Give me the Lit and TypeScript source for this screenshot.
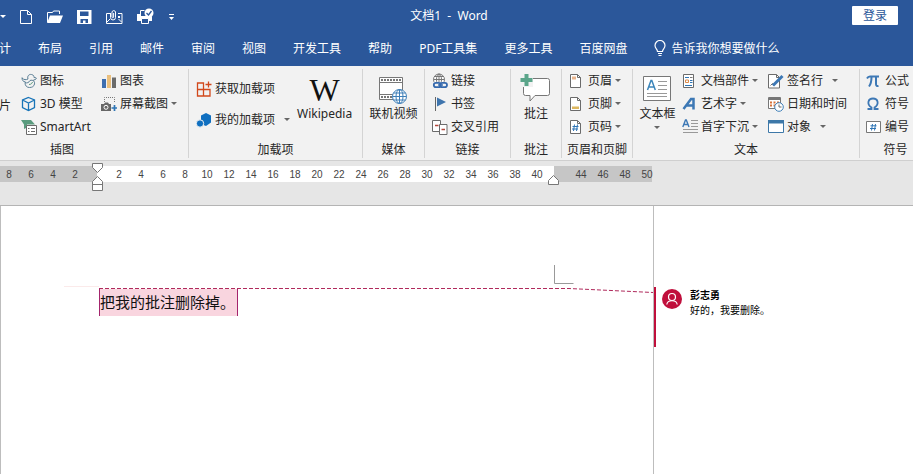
import { LitElement, html, css, svg, nothing, TemplateResult } from "lit";
import { customElement, property } from "lit/decorators.js";

const BLUE = "#2f75b5";
const GRAY = "#6b6b6b";

const icon = (w: number, h: number, body: TemplateResult) =>
  html`<svg width=${w} height=${h} viewBox="0 0 ${w} ${h}" fill="none" aria-hidden="true">${body}</svg>`;

const page = svg`<path d="M1.500 1.500h7l3 3v10h-10z" fill="#fff" stroke=${GRAY}/><path d="M8.500 1.500v3h3" stroke=${GRAY}/>`;

const icons: Record<string, TemplateResult> = {
  newDoc: icon(12, 16, svg`<path d="M.5 1.500h7l4 4v9H.5zM7.500 1.500v4h4" stroke="#fff"/>`),
  open: icon(17, 16, svg`<path d="M1.500 13V3.500h5l1-1.500h6v3" stroke="#fff"/><path d="M1 14 4 6.500h13L14 14z" fill="#fff"/>`),
  save: icon(15, 16, svg`<path d="M0 1h14.500v14H0z" fill="#fff"/><path d="M3 2.500h8.500v4.500H3zM3.500 10h7.500v4H8.500v-2.500H6V14H3.500z" fill="#2b579a"/>`),
  attach: icon(17, 16, svg`<path d="M4 4.500H.5v10h15.500v-10h-4M1 13l3-3M15.500 13l-3-3" stroke="#fff"/><path d="M4.500 4v4.500a2.500 2.500 0 0 0 5 0V3a1.800 1.800 0 0 0-3.500 0v5a.8.800 0 0 0 1.600 0V4" stroke="#fff"/><path d="M12 7h2v2h-2z" fill="#fff"/>`),
  print: icon(17, 17, svg`<path d="M0 6h4v2h9l2 1v4h-3v-2H4v2H0z" fill="#fff"/><path d="M4.500 10.500h7v5h-7z" fill="#2b579a" stroke="#fff"/><path d="M3.500 6V2.500h4" stroke="#fff"/><circle cx="12" cy="5" r="4.500" fill="#fff"/><path d="m9.500 5 2 2 3-4" stroke="#2b579a" stroke-width="1.300"/>`),
  more: icon(7, 8, svg`<path d="M1 1.500h5" stroke="#fff"/><path d="M1 4h5L3.500 7z" fill="#fff"/>`),
  bulb: icon(12, 17, svg`<path d="M3.500 11.500C3.500 9 1 8.500 1 5.500a5 5 0 0 1 10 0c0 3-2.500 3.500-2.500 6zM4 13.500h4M4.500 15.500h3" stroke="#fff" stroke-width="1.200"/>`),
  duck: icon(16, 16, svg`<path d="M1 5c2 2 4 2 6 1-1-3 1-5 3.500-4.500C13 2 13 3.500 13 4.500c2 0 3 .5 2 1.500l-3 1.500" stroke="#5b7f95"/><path d="M1 4.500c0 3 1 4 3.500 4.500" stroke="#5b7f95"/><path d="M4 9.500c2 1 4 0 5-2 3-1 5 1 4.500 3.500-.5 2.500-2.500 3.500-5 3.500S4 13 4 9.500z" stroke="#5b7f95"/><path d="M8 11.500c2 0 3-1 3.500-2.500" stroke="#5b9b7d"/>`),
  cube: icon(16, 16, svg`<path d="M7.500 1.500 13.500 4v7.500l-6 3-6-3V4zM1.500 4l6 3 6-3M7.500 7v7.500" stroke="#1874b8" stroke-width="1.300"/>`),
  smart: icon(16, 16, svg`<path d="M0 1h10l4 4.500H6v3L3 10V5.500z" fill="#5a9b7e"/><path d="M5.500 6.500h10v9h-10z" fill="#fff" stroke=${GRAY}/><path d="M7 9.500h1.500M10 9.500h4M7 12.500h1.500M10 12.500h4" stroke=${GRAY}/>`),
  chart: icon(16, 16, svg`<path d="M1 6h4v9H1z" fill="#3e6fb0"/><path d="M6 2h4v13H6z" fill="#eabf7d"/><path d="M11 4.500h4V15h-4z" fill="#6b6b6b"/>`),
  shot: icon(16, 16, svg`<path d="M3.500 6V1.500h10V7" stroke="#777" stroke-dasharray="1 1"/><path d="M0 8h3l1-1.500h3L8 8h2v7H0z" fill="#666"/><circle cx="5" cy="11.300" r="2" fill="#666" stroke="#fff"/><path d="M13.500 9v6M10.500 12h6" stroke="#2f75b5" stroke-width="1.700"/>`),
  store: icon(16, 16, svg`<path d="M1.500 2h6v6.500h-6zM1.500 8.500h6V15h-6zM7.500 8.500H14V15H7.500zM12.500.5v6M9.500 3.500h6" stroke="#d2491c" stroke-width="1.300"/>`),
  addins: icon(16, 16, svg`<path d="m5 3.500 5-2.500 5 2.500v7L10 14l-5-2z" fill="#0f6fc0"/><circle cx="4" cy="11.500" r="3.700" fill="#0f6fc0" stroke="#f2f2f2"/>`),
  video: icon(32, 30, svg`<path d="M2.500 2.500h23v22h-23z" fill="#fff" stroke="#777"/><path d="M4 5h21M4 22h21" stroke="#777" stroke-width="2" stroke-dasharray="2 1"/><path d="M3 7.500h22M3 19.500h22" stroke="#777"/><circle cx="22.500" cy="21.500" r="7" fill="#fff" stroke="#3e7fb8"/><ellipse cx="22.500" cy="21.500" rx="3.500" ry="7" stroke="#3e7fb8"/><path d="M22.500 14.500v14M15.500 21.500h14M16.500 18h12M16.500 25h12" stroke="#3e7fb8"/>`),
  link: icon(16, 16, svg`<circle cx="7" cy="6.500" r="5.500" fill="#fff" stroke="#777"/><ellipse cx="7" cy="6.500" rx="2.500" ry="5.500" stroke="#777"/><path d="M1.500 6.500h11M2.500 3.500h9M7 1v10" stroke="#777"/><path d="M1 9h15v6H1z" fill="#f2f2f2"/><rect x="1.800" y="9.800" width="7" height="4.400" rx="2.200" stroke="#3569ad" stroke-width="1.800"/><rect x="8" y="9.800" width="7" height="4.400" rx="2.200" stroke="#3569ad" stroke-width="1.800"/><path d="M6 12h5" stroke="#3569ad" stroke-width="1.400"/>`),
  flag: icon(16, 16, svg`<path d="M3.500 1v14" stroke="#666"/><path d="M5 1.500 14 6l-9 4.500z" fill="#3f75ad"/>`),
  cross: icon(16, 16, svg`<path d="M.5 1.500h8v11h-8z" fill="#fff" stroke=${GRAY}/><path d="M7.500 5.500H15v10H7.500z" fill="#fff" stroke=${GRAY}/><path d="M3 6.500h3.500M9.500 10.500H13" stroke="#b5483c" stroke-width="1.600"/>`),
  comment: icon(32, 32, svg`<path d="M4.500 4.500h23q2 0 2 2v13q0 2-2 2H15l-5 5.500v-5.500H5.500q-2 0-2-2v-15z" fill="#fff" stroke="#777"/><path d="M0 0h13v13H0z" fill="#f2f2f2"/><path d="M6.500 0v12M.5 6h12" stroke="#5ba58a" stroke-width="4"/>`),
  header: icon(14, 16, svg`${page}<path d="M3 3.500h4v3H3z" fill="#e9b48c"/>`),
  footer: icon(14, 16, svg`${page}<path d="M3 10.500h7V13H3z" fill="#ddb75e"/>`),
  pageNo: icon(14, 16, svg`${page}<path d="M5.500 5.500 4.500 12M8.500 5.500 7.500 12M3.500 7.500h6M3 10h6" stroke=${BLUE}/>`),
  textbox: icon(28, 28, svg`<path d="M.5.5h27v24H.5z" fill="#fff" stroke="#777"/><path d="M15 5.500h9M15 9.500h9M15 13.500h9M4 17.500h20M4 20.500h20" stroke="#999"/><path d="M4.500 14 8 4.500h.8L12.300 14M6 11h5" stroke="#3d86ba" stroke-width="1.500"/>`),
  parts: icon(15, 16, svg`<path d="M1.500 1.500h10v13h-10z" fill="#fff" stroke=${GRAY}/><path d="M3 4.500h4M3 12.500h7M8 7.500h2.500M8 9.500h2.500" stroke=${BLUE}/><path d="M3.500 7h3v2.500h-3z" stroke="#dd8b4a"/><path d="M8 4.500h2.500" stroke="#777"/>`),
  wordart: icon(15, 16, svg`<path d="M1.500 13 9 3h2.500v10.500M4.500 9.500H11" stroke="#3d78b5" stroke-width="2.500"/>`),
  dropcap: icon(16, 16, svg`<path d="m.8 8 2.700-7h.8L7 8M2 5.500h4" stroke="#3d78b5" stroke-width="1.400"/><path d="M9 1.500h7M9 4.500h7M9 7.500h7M1 10.500h15M1 13.500h15" stroke="#999"/>`),
  sign: icon(16, 16, svg`<path d="M.5 1.500h8l3 3v10.500H.5z" fill="#fff" stroke=${GRAY}/><path d="M8.500 1.500v3h3M2.500 12.500l2-2 1 2" stroke=${GRAY}/><path d="M5 12.500 14.500 3" stroke="#3d78b5" stroke-width="3"/>`),
  date: icon(16, 16, svg`<path d="M.5 1.500h12v11H.5z" fill="#fff" stroke="#777"/><path d="M1 3h11" stroke="#777" stroke-width="2"/><path d="M2 6.500h9M2 9.500h5" stroke="#d9733a" stroke-width="2" stroke-dasharray="2 1.500"/><circle cx="11" cy="11" r="4.300" fill="#fff" stroke="#3e7fb8"/><path d="M11 8.500V11h2.500" stroke="#666"/>`),
  object: icon(16, 16, svg`<path d="M.5 1.500h15v12H.5z" fill="#fff" stroke="#3d78a8"/><path d="M0 1h16v3.500H0z" fill="#3d78a8"/>`),
  pi: icon(15, 16, svg`<path d="M1 5.500Q2 3.500 4 3.500h9M5.500 4c0 4-.5 7-2.500 9.500M10 4v7q0 2.500 2.500 2" stroke="#3d78b5" stroke-width="2"/>`),
  omega: icon(15, 16, svg`<path d="M1.500 13h4v-1.500C2.500 9.500 2 7.500 2.500 5.500c1-4 8-4 9 0 .5 2 0 4-3 6V13h4" stroke="#3d78b5" stroke-width="1.800"/>`),
  number: icon(16, 16, svg`<path d="M.5 2.500h14v11H.5z" fill="#fff" stroke="#777"/><path d="M6.500 5 5.500 11.500M9.500 5 8.500 11.500M4.500 6.800h6M4 9.500h6" stroke=${BLUE}/>`),
};

interface Command {
  icon: string;
  label: string;
  menu?: boolean;
  /** The arrow is a separate half of the button, set further off. */
  split?: boolean;
}

/** One command of the ribbon: icon beside label, or icon above it when large. */
@customElement("ribbon-command")
class RibbonCommand extends LitElement {
  static styles = css`
    :host { display: block; }
    button {
      display: flex; align-items: center; gap: 3px; height: 23px; padding: 0; border: 0;
      background: none; color: #262626; font: inherit; line-height: 16px; white-space: nowrap;
    }
    svg { display: block; flex: none; }
    .pic { display: flex; min-width: 16px; }
    .arrow { border: 3px solid transparent; border-top-color: #666; border-bottom: 0; }
    .split .arrow { margin-left: 6px; }
    .large { flex-direction: column; gap: 0; height: auto; margin: 0 auto; }
    .large .pic { height: 32px; align-items: center; justify-content: center; }
    .large .arrow { margin-top: 4px; }
    .wiki { font: 32px/32px "Liberation Serif", serif; color: #111; }
  `;
  @property() icon = "";
  @property() label = "";
  @property({ type: Boolean }) menu = false;
  @property({ type: Boolean }) split = false;
  @property({ type: Boolean }) large = false;

  render() {
    return html`<button class=${this.large ? "large" : this.split ? "split" : "small"}>
      ${this.icon === "wiki" ? html`<span class="pic wiki" aria-hidden="true">W</span>`
        : this.icon ? html`<span class="pic">${icons[this.icon]}</span>` : nothing}
      <span>${this.label}</span>
      ${this.menu || this.split ? html`<span class="arrow"></span>` : nothing}
    </button>`;
  }
}

const column = (cls: string, commands: Command[]) => html`<div class="column ${cls}">
  ${commands.map((c) => html`<ribbon-command .icon=${c.icon} .label=${c.label} .menu=${!!c.menu} .split=${!!c.split}></ribbon-command>`)}
</div>`;

const large = (iconName: string, label: string, menu = false) =>
  html`<ribbon-command class="big" large .icon=${iconName} .label=${label} .menu=${menu}></ribbon-command>`;

const group = (cls: string, title: string, body: TemplateResult) => html`<section class="group ${cls}" aria-label=${title}>
  <div class="commands">${body}</div>
  <h2>${title}</h2>
</section>`;

const TABS = ["计", "布局", "引用", "邮件", "审阅", "视图", "开发工具", "帮助", "PDF工具集", "更多工具", "百度网盘"];
const QUICK = [["newDoc", "新建"], ["open", "打开"], ["save", "保存"], ["attach", "电子邮件"], ["print", "打印预览"]];
const TICKS = ["8", "6", "4", "2", "", ...Array.from({ length: 25 }, (_, i) => (i === 20 ? "" : String(2 * i + 2)))];

@customElement("app-root")
class AppRoot extends LitElement {
  static styles = css`
    :host {
      display: flex; flex-direction: column; min-height: 100vh; overflow: hidden; background: #fff;
      font: 12px/16px "Noto Sans", "Noto Sans CJK SC", sans-serif; color: #262626;
    }
    svg { display: block; flex: none; }
    button { border: 0; padding: 0; background: none; color: inherit; font: inherit; white-space: nowrap; }
    h1, h2, p { margin: 0; font: inherit; }

    .top { background: #2b579a; color: #fff; }
    .titlebar {
      display: grid; grid-template-columns: 1fr auto 1fr; align-items: center; height: 31px;
      padding-right: 15px;
    }
    .quick { display: flex; align-items: center; gap: 14px; padding-top: 2px; }
    .quick .caret { border: 3px solid transparent; border-top-color: #fff; border-bottom: 0; }
    .title { white-space: pre; }
    .login { justify-self: end; width: 46px; height: 19px; background: #fff; color: #2b579a; border-radius: 1px; }
    .tabs { display: flex; align-items: center; gap: 27px; height: 35px; margin-left: -1px; }
    .tell { display: flex; align-items: center; gap: 5px; flex: 1; }
    .tell input {
      flex: 1; min-width: 0; padding: 0; border: 0; outline: 0; background: none; color: #fff; font: inherit;
    }
    .tell input::placeholder { color: #fff; opacity: 1; }

    .ribbon { display: flex; height: 89px; padding: 3px 0 2px; background: #f2f2f2; border-bottom: 1px solid #cfcfcf; }
    .group {
      display: flex; flex-direction: column; flex: none; box-sizing: border-box;
      border-right: 1px solid #d4d4d4;
    }
    .commands { display: flex; flex: 1; }
    .group h2 { text-align: center; line-height: 16px; white-space: nowrap; }
    .column { display: flex; flex-direction: column; flex: none; }
    .big { padding-top: 5px; }
    .pictures { width: 189px; }
    .pictures h2 { padding-right: 64px; }
    .cut { justify-content: center; width: 22px; margin-left: -1px; }
    .shapes { width: 80px; }
    .addins { width: 174px; }
    .addins .column { gap: 8px; padding: 8px 7px 0 7px; }
    .media { width: 62px; }
    .links { width: 86px; }
    .links .column { padding-left: 7px; }
    .notes { width: 51px; }
    .media .big, .notes .big { flex: 1; }
    .headers { width: 71px; }
    .headers .column { padding-left: 7px; }
    .text { width: 227px; }
    .text .big { width: 49px; }
    .parts { width: 86px; }
    .symbols { flex: 1; border: 0; }
    .symbols .column { padding-left: 6px; }
    .symbols h2 { padding-left: 18px; }

    .ruler { position: relative; height: 44px; background: #e6e6e6; border-bottom: 1px solid #b4b4b4; overflow: hidden; }
    .scale { width: 652px; height: 16px; margin-top: 5px; display: flex; background: #c6c6c6; }
    .scale .live { width: 457px; margin-left: 97px; background: #fff; }
    .ticks {
      position: absolute; left: -2px; top: 5px; width: 660px; display: grid;
      grid-template-columns: repeat(30, 1fr); text-align: center;
      font: 10px/18px "Liberation Sans", sans-serif; color: #444;
    }
    .marker { position: absolute; top: 2px; left: 91px; }
    .marker.right { top: 14px; left: 548px; }

    .desk { position: relative; display: grid; grid-template-columns: 654px 1fr; flex: 1; }
    .sheet { border: solid #bdbdbd; border-width: 0 1px; padding: 83px 98px 0; }
    .marked {
      display: inline-block; padding: 0 2px 2px 0; background: #f9d5df;
      border: solid #a3246c; border-width: 0 1px;
      font: 15px/25px "Noto Sans CJK SC", sans-serif; color: #111;
    }
    .guide { position: absolute; left: 0; top: 0; pointer-events: none; }
    .comment {
      display: flex; gap: 8px; align-self: start; height: 60px; margin-top: 81px; padding-left: 6px;
      border-left: 2px solid #c00f3c; font: 10px/15px "Noto Sans CJK SC", sans-serif; color: #000;
    }
    .comment svg { margin-top: 2px; }
    .comment .name { font-weight: bold; }
  `;

  render() {
    return html`
      <header class="top">
        <div class="titlebar">
          <div class="quick">
            <span class="caret"></span>
            ${QUICK.map(([name, label]) => html`<button aria-label=${label}>${icons[name]}</button>`)}
            <button aria-label="自定义快速访问工具栏">${icons.more}</button>
          </div>
          <h1 class="title">文档1  -  Word</h1>
          <button class="login">登录</button>
        </div>
        <nav class="tabs">
          ${TABS.map((t) => html`<button>${t}</button>`)}
          <label class="tell">${icons.bulb}<input placeholder="告诉我你想要做什么" aria-label="告诉我你想要做什么" /></label>
        </nav>
      </header>

      <div class="ribbon">
        ${group("pictures", "插图", html`
          ${column("cut", [{ icon: "", label: "片" }])}
          ${column("shapes", [{ icon: "duck", label: "图标" }, { icon: "cube", label: "3D 模型" }, { icon: "smart", label: "SmartArt" }])}
          ${column("", [{ icon: "chart", label: "图表" }, { icon: "shot", label: "屏幕截图", menu: true }])}`)}
        ${group("addins", "加载项", html`
          ${column("", [{ icon: "store", label: "获取加载项" }, { icon: "addins", label: "我的加载项", split: true }])}
          ${large("wiki", "Wikipedia")}`)}
        ${group("media", "媒体", large("video", "联机视频"))}
        ${group("links", "链接", column("", [{ icon: "link", label: "链接" }, { icon: "flag", label: "书签" }, { icon: "cross", label: "交叉引用" }]))}
        ${group("notes", "批注", large("comment", "批注"))}
        ${group("headers", "页眉和页脚", column("", [
          { icon: "header", label: "页眉", menu: true }, { icon: "footer", label: "页脚", menu: true }, { icon: "pageNo", label: "页码", menu: true }]))}
        ${group("text", "文本", html`
          ${large("textbox", "文本框", true)}
          ${column("parts", [{ icon: "parts", label: "文档部件", menu: true }, { icon: "wordart", label: "艺术字", menu: true }, { icon: "dropcap", label: "首字下沉", menu: true }])}
          ${column("", [{ icon: "sign", label: "签名行", split: true }, { icon: "date", label: "日期和时间" }, { icon: "object", label: "对象", split: true }])}`)}
        ${group("symbols", "符号", column("", [{ icon: "pi", label: "公式" }, { icon: "omega", label: "符号" }, { icon: "number", label: "编号" }]))}
      </div>

      <div class="ruler">
        <div class="scale"><div class="live"></div></div>
        <div class="ticks">${TICKS.map((t) => html`<span>${t}</span>`)}</div>
        <svg class="marker" width="12" height="29" viewBox="0 0 12 29" fill="#fff" stroke="#777" aria-hidden="true">
          <path d="M1.500.5h10v4l-5 5-5-5zM6.500 13.500l5 5v9h-10v-9zM1.500 21.500h10"/>
        </svg>
        <svg class="marker right" width="12" height="11" viewBox="0 0 12 11" fill="#fff" stroke="#777" aria-hidden="true">
          <path d="M5.500.5l5 5v4H.5v-4z"/>
        </svg>
      </div>

      <main class="desk">
        <article class="sheet"><p class="marked">把我的批注删除掉。</p></article>
        <aside class="comment">
          <svg width="20" height="20" viewBox="0 0 20 20" fill="none" aria-hidden="true">
            <circle cx="10" cy="10" r="10" fill="#c00f3c"/>
            <circle cx="10" cy="8" r="3.500" stroke="#fff" stroke-width="1.200"/>
            <path d="M4.800 15.500c.6-5 9.800-5 10.400 0" stroke="#fff" stroke-width="1.200"/>
          </svg>
          <div class="body"><p class="name">彭志勇</p><p>好的，我要删除。</p></div>
        </aside>
        <svg class="guide" width="656" height="120" viewBox="0 0 656 120" fill="none" aria-hidden="true">
          <path d="M64 80.500h35" stroke="#fbeaea"/>
          <path d="M99 82.500h470l84 4" stroke="#b02a5c" stroke-dasharray="4 2"/>
          <path d="M554.500 59v18.500h19" stroke="#999"/>
        </svg>
      </main>`;
  }
}
